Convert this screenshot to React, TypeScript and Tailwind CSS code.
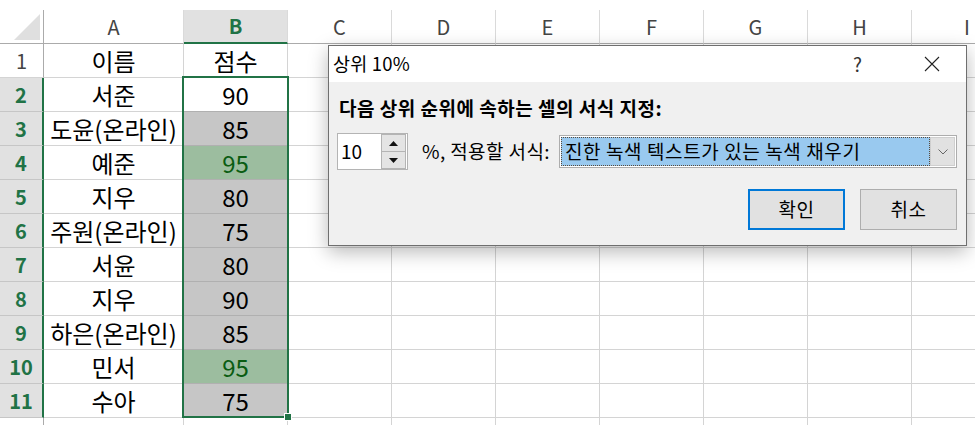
import React from "react";

type Fill = "none" | "gray" | "green";

const rows: Array<{ n: number; name: string; score: string; fill: Fill }> = [
  { n: 2, name: "서준", score: "90", fill: "none" },
  { n: 3, name: "도윤(온라인)", score: "85", fill: "gray" },
  { n: 4, name: "예준", score: "95", fill: "green" },
  { n: 5, name: "지우", score: "80", fill: "gray" },
  { n: 6, name: "주원(온라인)", score: "75", fill: "gray" },
  { n: 7, name: "서윤", score: "80", fill: "gray" },
  { n: 8, name: "지우", score: "90", fill: "gray" },
  { n: 9, name: "하은(온라인)", score: "85", fill: "gray" },
  { n: 10, name: "민서", score: "95", fill: "green" },
  { n: 11, name: "수아", score: "75", fill: "gray" },
];

const rest = ["C", "D", "E", "F", "G", "H"];

function EmptyCells() {
  return (
    <>
      {rest.map((c) => (
        <div key={c} className="w-[104px] shrink-0 border-r border-b border-[#d4d4d4]" />
      ))}
      <div className="flex-1 border-b border-[#d4d4d4]" />
    </>
  );
}

function Dialog() {
  return (
    <div className="absolute left-[328px] top-[45px] w-[639px] h-[201px] border border-[#6f6f6f] bg-[#f0f0f0] shadow-[0_6px_18px_rgba(0,0,0,0.28)] flex flex-col">
      <div className="h-[36px] bg-white flex items-center pl-[4px] text-[18.5px] text-black">
        <span className="tracking-[0.2px]">상위 10%</span>
        <span className="ml-auto mr-[62px] text-[19px] text-[#333]">?</span>
        <svg width="16" height="16" viewBox="0 0 16 16" className="mr-[26px]">
          <path d="M1 1 L15 15 M15 1 L1 15" stroke="#222" strokeWidth="1.1" fill="none" />
        </svg>
      </div>
      <div className="flex-1 flex flex-col pl-[8px] pr-[9px]">
        <div className="mt-[14px] ml-[2px] text-[19px] font-bold text-black leading-[24px] tracking-[0.5px]">
          다음 상위 순위에 속하는 셀의 서식 지정:
        </div>
        <div className="mt-[13px] flex items-center">
          <div className="w-[71px] h-[37px] bg-white border border-[#b4b4b4] flex items-center">
            <span className="pl-[3px] text-[19px] text-black flex-1">10</span>
            <div className="w-[25px] h-[35px] flex flex-col mr-[1px]">
              <div className="flex-1 bg-[#e4e4e4] border border-[#b4b4b4] flex items-center justify-center">
                <svg width="9" height="5" viewBox="0 0 9 5">
                  <path d="M0 5 L4.5 0 L9 5 Z" fill="#111" />
                </svg>
              </div>
              <div className="flex-1 bg-[#e4e4e4] border border-t-0 border-[#b4b4b4] flex items-center justify-center">
                <svg width="9" height="5" viewBox="0 0 9 5">
                  <path d="M0 0 L4.5 5 L9 0 Z" fill="#111" />
                </svg>
              </div>
            </div>
          </div>
          <span className="ml-[14px] text-[19px] text-black tracking-[0.4px]">%, 적용할 서식:</span>
          <div className="ml-auto w-[398px] h-[33px] bg-white border border-[#adadad] flex items-center p-[1px]">
            <div className="h-full flex-1 bg-[#99c9ef] border border-dotted border-[#5a4a3a] flex items-center pl-[3px] text-[19px] text-black tracking-[0.6px]">
              진한 녹색 텍스트가 있는 녹색 채우기
            </div>
            <div className="w-[25px] h-full bg-[#e1e1e1] border border-[#cfcfcf] flex items-center justify-center">
              <svg width="10" height="6" viewBox="0 0 10 6">
                <path d="M0.5 0.5 L5 5 L9.5 0.5" stroke="#666" strokeWidth="1" fill="none" />
              </svg>
            </div>
          </div>
        </div>
        <div className="mt-[19px] flex justify-end gap-[15px]">
          <button className="w-[97px] h-[41px] bg-[#e1e1e1] border-2 border-[#0078d7] text-[19px] text-black tracking-[0.5px]">
            확인
          </button>
          <button className="w-[97px] h-[41px] bg-[#e1e1e1] border border-[#adadad] text-[19px] text-black tracking-[0.5px]">
            취소
          </button>
        </div>
      </div>
    </div>
  );
}

export default function App() {
  return (
    <div
      className="relative w-[975px] h-[425px] overflow-hidden bg-white text-black"
      style={{ fontFamily: '"Noto Sans CJK KR", "Noto Sans", sans-serif' }}
    >
      <div className="h-[10px] bg-white" />
      {/* column headers */}
      <div className="flex h-[34px] text-[20px] text-[#444]">
        <div className="w-[44px] shrink-0 border-r border-b border-[#ababab] flex items-end justify-end p-[3px]">
          <svg width="26" height="26" viewBox="0 0 26 26">
            <path d="M26 0 L26 26 L0 26 Z" fill="#dfdfdf" />
          </svg>
        </div>
        <div className="w-[140px] shrink-0 border-r border-b border-r-[#dadada] border-b-[#ababab] flex items-center justify-center">
          A
        </div>
        <div className="w-[104px] shrink-0 bg-[#e1e1e1] border-r border-r-[#dadada] border-b-2 border-b-[#217346] flex items-center justify-center font-bold text-[#217346]">
          B
        </div>
        {rest.map((c) => (
          <div
            key={c}
            className="w-[104px] shrink-0 border-r border-b border-r-[#dadada] border-b-[#ababab] flex items-center justify-center"
          >
            {c}
          </div>
        ))}
        <div className="flex-1 border-b border-[#ababab] flex items-center pl-[52px]">I</div>
      </div>
      {/* row 1 */}
      <div className="flex h-[34px] text-[24px]">
        <div className="w-[44px] shrink-0 border-r border-b border-r-[#ababab] border-b-[#d4d4d4] flex items-center justify-center text-[20px] text-[#444]">
          1
        </div>
        <div className="w-[140px] shrink-0 border-r border-b border-[#d4d4d4] flex items-center justify-center">
          이름
        </div>
        <div className="w-[104px] shrink-0 border-r border-b border-[#d4d4d4] flex items-center justify-center">
          점수
        </div>
        <EmptyCells />
      </div>
      {rows.map((r) => (
        <div key={r.n} className="flex h-[34px] text-[24px]">
          <div className="w-[44px] shrink-0 bg-[#e1e1e1] border-r-2 border-r-[#217346] border-b border-b-[#c6c6c6] flex items-center justify-center text-[20px] font-bold text-[#217346]">
            {r.n}
          </div>
          <div className="w-[140px] shrink-0 border-r border-b border-[#d4d4d4] flex items-center justify-center">
            {r.name}
          </div>
          <div
            className={`w-[104px] shrink-0 border-r border-b flex items-center justify-center ${
              r.fill === "green"
                ? "bg-[#9cbd9f] text-[#0a5c12] border-[#b0b0b0]"
                : r.fill === "gray"
                ? "bg-[#c6c6c6] border-[#b0b0b0]"
                : "bg-white border-[#b0b0b0]"
            }`}
          >
            {r.score}
          </div>
          <EmptyCells />
        </div>
      ))}
      <div className="flex h-[20px]">
        <div className="w-[44px] shrink-0 border-r border-[#ababab]" />
        <div className="w-[140px] shrink-0 border-r border-[#d4d4d4]" />
        <div className="w-[104px] shrink-0 border-r border-[#d4d4d4]" />
        {rest.map((c) => (
          <div key={c} className="w-[104px] shrink-0 border-r border-[#d4d4d4]" />
        ))}
      </div>

      {/* selection outline over B2:B11 */}
      <div className="absolute left-[182px] top-[76px] w-[107px] h-[342px] border-2 border-[#217346] pointer-events-none" />
      <div className="absolute left-[284px] top-[413px] w-[8px] h-[8px] bg-[#217346] border border-white" />

      <Dialog />
    </div>
  );
}
